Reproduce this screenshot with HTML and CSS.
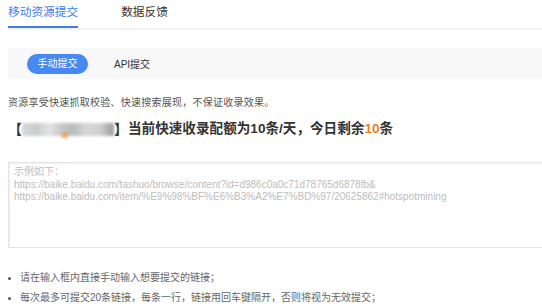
FILE: index.html
```html
<!DOCTYPE html>
<html lang="zh-CN">
<head>
<meta charset="utf-8">
<link rel="stylesheet" href="styles.css">
</head>
<body>
<div class="page">
  <div class="tabs">
    <div class="tab active">移动资源提交</div>
    <div class="tab">数据反馈</div>
  </div>
  <div class="subbar">
    <span class="pill">手动提交</span>
    <span class="sub">API提交</span>
  </div>
  <p class="desc">资源享受快速抓取校验、快速搜索展现，不保证收录效果。</p>
  <h2 class="quota">【<span class="blur"><span class="blur-orange"></span></span>】<span class="qtext">当前快速收录配额为10条/天，今日剩余<span class="num">10</span>条</span></h2>
  <div class="inputbox">
    <div class="ph">示例如下：</div>
    <div class="ph">https://baike.baidu.com/tashuo/browse/content?id=d986c0a0c71d78765d6878fb&amp;</div>
    <div class="ph">https://baike.baidu.com/item/%E9%98%BF%E6%B3%A2%E7%BD%97/20625862#hotspotmining</div>
  </div>
  <ul class="tips">
    <li>请在输入框内直接手动输入想要提交的链接；</li>
    <li>每次最多可提交20条链接，每条一行，链接用回车键隔开，否则将视为无效提交；</li>
  </ul>
</div>
</body>
</html>
```
FILE: styles.css
```css
html, body {
  margin: 0;
  padding: 0;
  background: #fff;
}
body {
  font-family: "Liberation Sans", "Noto Sans CJK SC", sans-serif;
  overflow: hidden;
}
.page {
  padding-left: 8px;
}
.tabs {
  display: flex;
  gap: 43px;
  height: 28px;
  border-bottom: 2px solid #f1f1f1;
}
.tab {
  font-size: 11.7px;
  line-height: 22px;
  padding-top: 1px;
  color: #333;
  height: 25px;
  white-space: nowrap;
}
.tab.active {
  color: #3c80ee;
  border-bottom: 2px solid #3c7fe6;
}
.subbar {
  margin-top: 18px;
  height: 31px;
  background: #f8f8f8;
  display: flex;
  align-items: center;
  padding-left: 19px;
  gap: 26px;
}
.pill {
  width: 61px;
  height: 20px;
  border-radius: 10px;
  background: #4788f2;
  color: #fff;
  font-size: 10px;
  line-height: 20px;
  text-align: center;
}
.sub {
  font-size: 10px;
  color: #333;
}
.desc {
  margin: 17px 0 0;
  font-size: 10px;
  line-height: 14px;
  color: #555;
  letter-spacing: 0.25px;
}
.quota {
  margin: 9px 0 0;
  font-size: 14px;
  line-height: 20px;
  font-weight: bold;
  color: #333;
  display: flex;
  align-items: center;
}
.qtext {
  font-size: 13.6px;
}
.blur {
  display: inline-block;
  position: relative;
  width: 92px;
  height: 13px;
  background: linear-gradient(90deg, #d9d9d9 0%, #c9cbcd 15%, #e3e3e3 30%, #c4c4c4 45%, #b9bcbf 55%, #d6d6d6 70%, #cfcfcf 85%, #9a9a9a 100%);
  filter: blur(1.5px);
}
.blur-orange {
  position: absolute;
  left: 40px;
  top: 9px;
  width: 6px;
  height: 6px;
  background: #e9a46a;
}
.num {
  color: #f37b1d;
}
.inputbox {
  margin-top: 23px;
  height: 78px;
  border: 1px solid #e4e4e4;
  border-right: none;
  box-shadow: inset 1px 1px 2px #f0f0f0;
  padding: 3px 0 3px 5px;
  overflow: hidden;
}
.ph {
  font-size: 10px;
  line-height: 12.5px;
  color: #bdbdbd;
  white-space: nowrap;
}
.tips {
  margin: 20px 0 0;
  padding: 0;
  list-style: none;
}
.tips li {
  font-size: 10px;
  line-height: 20px;
  color: #666;
  display: flex;
  align-items: center;
  gap: 9px;
}
.tips li::before {
  content: "";
  width: 3px;
  height: 3px;
  border-radius: 50%;
  background: #555;
}
```
